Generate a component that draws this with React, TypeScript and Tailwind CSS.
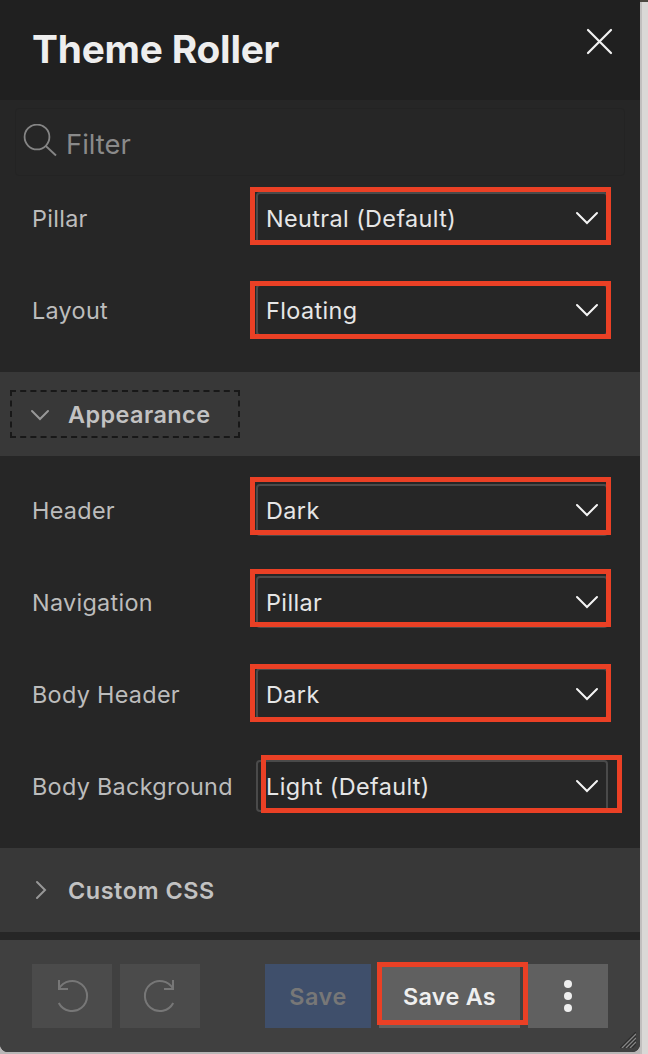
import React from "react";

type Option = { label: string; value: string; mark: string };

const themeOptions: Option[] = [
  { label: "Pillar", value: "Neutral (Default)", mark: "-top-[5px] -left-[6px]" },
  { label: "Layout", value: "Floating", mark: "-top-[3px] -left-[6px]" },
];

const appearanceOptions: Option[] = [
  { label: "Header", value: "Dark", mark: "-top-[7px] -left-[6px]" },
  { label: "Navigation", value: "Pillar", mark: "-top-[7px] -left-[6px]" },
  { label: "Body Header", value: "Dark", mark: "-top-[4px] -left-[6px]" },
  { label: "Body Background", value: "Light (Default)", mark: "-top-[5px] left-[5px]" },
];

function OptionRow({ label, value, mark }: Option) {
  return (
    <div className="flex h-[52px] items-center">
      <span className="w-56 shrink-0 pt-[2px] whitespace-nowrap tracking-[0.3px] text-[#bcbcbc]">{label}</span>
      <div className="relative h-[52px] w-[352px]">
        <button className="flex h-full w-full items-center justify-between rounded-[4px] border-2 border-[#4a4a4a] pr-[7px] pl-[8px] text-[#e6e6e6]">
          <span className="pt-[2px] tracking-[0.4px]">{value}</span>
          <svg className="h-6 w-6" viewBox="0 0 24 24" fill="none" stroke="#f4f4f4" strokeWidth="2" strokeLinecap="round">
            <path d="M2 7 L12 17 L22 7" />
          </svg>
        </button>
        <div className={`pointer-events-none absolute h-[58px] w-[361px] border-[5px] border-[#ea4025] ${mark}`} />
      </div>
    </div>
  );
}

export default function App() {
  return (
    <div className="relative flex h-[1054px] w-[648px] overflow-hidden bg-[#dad8d6] font-['Inter','Liberation_Sans',sans-serif] text-[23.4px] leading-[32px]">
      <div className="h-full w-[640px] bg-[#b9b7b7]">
        <div className="relative flex h-[1052px] flex-col overflow-hidden rounded-b-[8px] bg-[#262626]">
          <header className="flex h-[100px] shrink-0 justify-between bg-[#202020] pr-[27px] pl-8">
            <h1 className="pt-[24px] text-[38.8px] leading-[50px] font-bold tracking-[-0.2px] whitespace-nowrap text-[#eeeeee]">Theme Roller</h1>
            <svg className="mt-[28px] h-[27px] w-[27px]" viewBox="0 0 27 27" fill="none" stroke="#f2f2f2" strokeWidth="2.2" strokeLinecap="round">
              <path d="M2 2 L25 25 M25 2 L2 25" />
            </svg>
          </header>

          <div className="mx-[15px] mt-2 flex h-[68px] shrink-0 items-center rounded-[4px] border border-[#232323]">
            <svg className="ml-[6px] h-9 w-9" viewBox="0 0 36 36" fill="none" stroke="#858585" strokeWidth="1.8">
              <circle cx="15" cy="13" r="12.4" />
              <path d="M23.8 22 L34 31.5" />
            </svg>
            <span className="mt-[4px] ml-2 text-[27.4px] tracking-[0px] text-[#8a8a8a]">Filter</span>
          </div>

          <div className="mt-4 flex flex-col gap-10 pl-8">
            {themeOptions.map((o) => <OptionRow key={o.label} {...o} />)}
          </div>

          <div className="mt-9 flex h-[84px] shrink-0 items-center bg-[#383838] pl-[10px]">
            <button className="flex h-12 w-[230px] items-center border-2 border-dashed border-[#181818] pl-[18px] text-[#c2c2c2]">
              <svg className="mt-[2px] h-5 w-5" viewBox="0 0 20 20" fill="none" stroke="#989898" strokeWidth="2" strokeLinecap="round">
                <path d="M2 6 L10 14 L18 6" />
              </svg>
              <span className="ml-[18px] pt-[2px] font-semibold tracking-[0.45px]">Appearance</span>
            </button>
          </div>

          <div className="mt-7 flex flex-col gap-10 pl-8">
            {appearanceOptions.map((o) => <OptionRow key={o.label} {...o} />)}
          </div>

          <div className="mt-9 flex h-[84px] shrink-0 items-center bg-[#383838] pl-[30px] text-[#c2c2c2]">
            <svg className="h-5 w-5" viewBox="0 0 20 20" fill="none" stroke="#989898" strokeWidth="2" strokeLinecap="round">
              <path d="M7 2 L15 10 L7 18" />
            </svg>
            <span className="ml-[18px] pt-[2px] font-semibold tracking-[0.55px]">Custom CSS</span>
          </div>

          <footer className="mt-2 flex h-28 shrink-0 gap-2 bg-[#404040] px-8 pt-6 font-semibold">
            <button className="flex h-16 w-20 items-center justify-center bg-[#4b4b4b]">
              <svg className="h-10 w-10" viewBox="0 0 40 40" fill="none" stroke="#777777" strokeWidth="2">
                <path d="M7 4 V13 H16 M7 12.7 A15 15 0 1 1 6.8 27" />
              </svg>
            </button>
            <button className="flex h-16 w-20 items-center justify-center bg-[#4b4b4b]">
              <svg className="h-10 w-10" viewBox="0 0 40 40" fill="none" stroke="#777777" strokeWidth="2">
                <path d="M33 4 V13 H24 M33 12.7 A15 15 0 1 0 33.2 27" />
              </svg>
            </button>
            <button className="ml-auto flex h-16 w-[106px] items-center justify-center bg-[#3f4f6b] pt-[2px] tracking-[0.55px] text-[#777777]">Save</button>
            <div className="relative h-16 w-[141px]">
              <button className="h-full w-full bg-[#606060] pt-[2px] tracking-[0.3px] text-[#efefef]">Save As</button>
              <div className="pointer-events-none absolute -top-[2px] -left-[2px] h-[63px] w-[151px] border-[5px] border-[#ea4025]" />
            </div>
            <button className="flex h-16 w-20 flex-col items-center justify-center gap-1 bg-[#606060]">
              <span className="h-2 w-2 rounded-full bg-[#eeeeee]" />
              <span className="h-2 w-2 rounded-full bg-[#eeeeee]" />
              <span className="h-2 w-2 rounded-full bg-[#eeeeee]" />
            </button>
          </footer>
          <svg className="absolute right-1 bottom-1 h-4 w-4" viewBox="0 0 16 16" fill="none" strokeWidth="1.2">
            <path d="M0 16 L16 0 M4 16 L16 4 M8 16 L16 8 M12 16 L16 12" stroke="#2c2c2c" />
            <path d="M2 16 L16 2 M6 16 L16 6 M10 16 L16 10" stroke="#858585" />
          </svg>
        </div>
      </div>
      <div className="w-[2px] bg-[#c1bfbe]" />
      <div className="absolute top-0 right-0 h-[2px] w-2 bg-[#4b4740]" />
    </div>
  );
}
